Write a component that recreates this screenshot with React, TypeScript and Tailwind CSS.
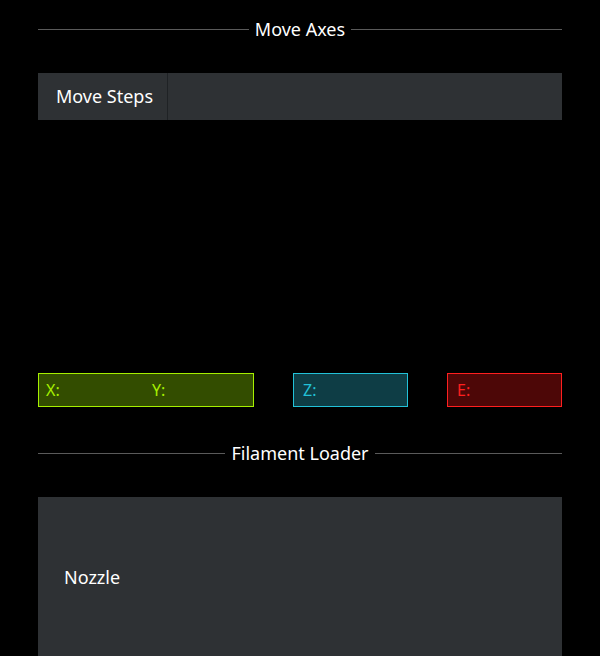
const font = { fontFamily: '"Noto Sans", "Open Sans", sans-serif' };

const SectionTitle = ({ title }: { title: string }) => (
  <div className="flex items-center gap-[6px]">
    <div className="h-px flex-1 bg-[#5a5a5a]" />
    <span className="text-[18px] leading-6 text-white">{title}</span>
    <div className="h-px flex-1 bg-[#5a5a5a]" />
  </div>
);

export default function App() {
  return (
    <div className="h-[656px] overflow-hidden bg-black px-[38px] pt-[17px]" style={font}>
      <SectionTitle title="Move Axes" />

      {/* step selector */}
      <div className="mt-8 flex h-[47px] bg-[#2e3134]">
        <div className="flex items-center border-r border-[#1f2225] pl-[18px] pr-[14px] text-[18px] text-white">
          Move Steps
        </div>
      </div>

      <div className="h-[253px]" />

      {/* position readout */}
      <div className="flex gap-[39px] text-[16px]">
        <div className="flex h-[34px] w-[216px] items-center border border-[#a6f000] bg-[#334d00] pl-[7px] text-[#a6f000]">
          <span className="w-[106px]">X:</span>
          <span>Y:</span>
        </div>
        <div className="flex h-[34px] w-[115px] items-center border border-[#22c2d8] bg-[#0e3d45] pl-[9px] text-[#22c2d8]">
          Z:
        </div>
        <div className="ml-auto flex h-[34px] w-[115px] items-center border border-[#ff1f1f] bg-[#4d0707] pl-[9px] text-[#ff1f1f]">
          E:
        </div>
      </div>

      <div className="mt-[34px]">
        <SectionTitle title="Filament Loader" />
      </div>

      <div className="mt-8 h-[180px] bg-[#2e3134] pl-[26px] pt-[68px]">
        <div className="text-[18px] leading-6 text-white">Nozzle</div>
      </div>
    </div>
  );
}
